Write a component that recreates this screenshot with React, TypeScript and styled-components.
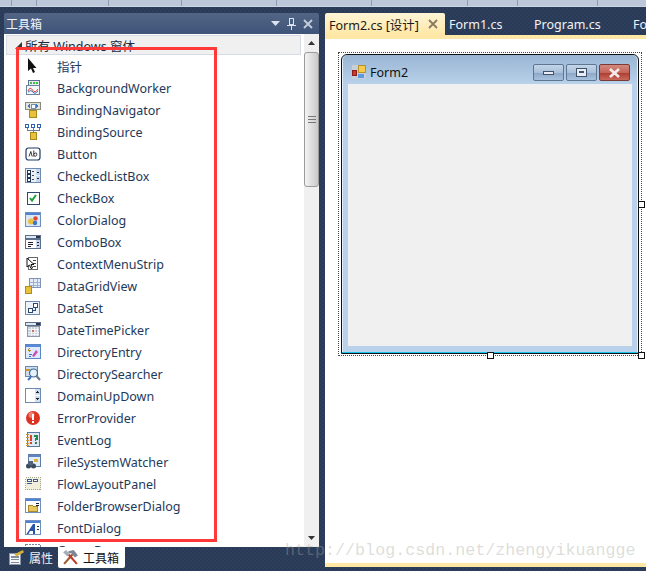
import React from 'react';
import styled, { createGlobalStyle } from 'styled-components';

const GlobalStyle = createGlobalStyle`
  html, body {
    margin: 0;
    padding: 0;
    background: #2b3c59;
  }
`;

const UI_FONT = `"Noto Sans", "Noto Sans CJK SC", sans-serif`;

const Page = styled.div`
  position: relative;
  display: flex;
  flex-direction: column;
  width: 646px;
  height: 571px;
  overflow: hidden;
  font-family: ${UI_FONT};
  background: repeating-conic-gradient(#2e3f5d 0 25%, #293a56 0 50%) 0 0 / 4px 4px;
`;

const TopBar = styled.div`
  display: flex;
  flex: none;
  height: 6px;
  background: #bcc7d9;
  border-bottom: 1px solid #cdd5e3;
`;

const TopSegment = styled.div<{ $w: number }>`
  flex: none;
  width: ${p => p.$w}px;
  border-right: 1px solid #8f9cb3;
  box-sizing: border-box;
`;

const Workspace = styled.div`
  display: flex;
  flex: 1;
  min-height: 0;
  padding: 6px 0 0 4px;
  gap: 6px;
`;

const ToolColumn = styled.div`
  display: flex;
  flex-direction: column;
  flex: none;
  width: 315px;
`;

const ToolWindow = styled.div`
  display: flex;
  flex-direction: column;
  height: 534px;
`;

const TitleBar = styled.div`
  display: flex;
  align-items: center;
  flex: none;
  height: 21px;
  padding: 0 6px 0 2px;
  border-radius: 2px 2px 0 0;
  background: linear-gradient(#526585, #3f5479);
  color: #f2f4f8;
  font-size: 12px;
`;

const TitleText = styled.span`
  flex: 1;
`;

const TitleIcons = styled.div`
  display: flex;
  align-items: center;
  gap: 7px;
`;

const ToolBody = styled.div`
  display: flex;
  flex: 1;
  min-height: 0;
  background: #fff;
`;

const ListArea = styled.div`
  flex: 1;
  min-width: 0;
  overflow: hidden;
  padding: 1px 3px 0 2px;
`;

const GroupHeader = styled.div`
  display: flex;
  align-items: center;
  gap: 3px;
  box-sizing: border-box;
  height: 20px;
  padding-left: 8px;
  background: #f0f0f0;
  border: 1px solid #d5dce6;
  color: #1c2a40;
  font-size: 12.5px;
  white-space: nowrap;
`;

const ToolRow = styled.div`
  display: flex;
  align-items: center;
  height: 22px;
  padding-left: 17px;
  color: #1e395b;
  font-size: 12.5px;
`;

const IconSlot = styled.span`
  display: flex;
  justify-content: center;
  width: 20px;
  margin-right: 14px;
  flex: none;
`;

const ScrollBar = styled.div`
  display: flex;
  flex-direction: column;
  align-items: center;
  flex: none;
  width: 15px;
  background: #f0f0f0;
`;

const ScrollArrow = styled.div`
  display: flex;
  align-items: center;
  justify-content: center;
  flex: none;
  height: 18px;
`;

const ScrollThumb = styled.div`
  display: flex;
  align-items: center;
  justify-content: center;
  box-sizing: border-box;
  flex: none;
  width: 15px;
  height: 135px;
  border: 1px solid #9a9a9a;
  border-radius: 3px;
  background: linear-gradient(90deg, #f4f4f4, #dcdcdc 55%, #c9c9c9);
`;

const ScrollTrack = styled.div`
  flex: 1;
`;

const BottomTabs = styled.div`
  display: flex;
  align-items: flex-start;
  flex: none;
  height: 24px;
  padding-left: 4px;
  gap: 3px;
`;

const BottomTab = styled.div<{ $active?: boolean }>`
  display: flex;
  align-items: center;
  gap: 4px;
  height: 21px;
  padding: ${p => (p.$active ? '0 6px 0 4px' : '0 2px 0 0')};
  font-size: 12px;
  border-radius: 0 0 2px 2px;
  background: ${p => (p.$active ? '#fff' : 'transparent')};
  color: ${p => (p.$active ? '#111' : '#eef1f6')};
`;

const DocColumn = styled.div`
  display: flex;
  flex-direction: column;
  flex: 1;
  min-width: 0;
  height: 554px;
`;

const DocTabs = styled.div`
  display: flex;
  flex: none;
  height: 22px;
  overflow: hidden;
  white-space: nowrap;
`;

const DocTab = styled.div<{ $active?: boolean; $w: number }>`
  display: flex;
  align-items: center;
  justify-content: space-between;
  box-sizing: border-box;
  flex: none;
  width: ${p => p.$w}px;
  padding: 0 7px 0 4px;
  font-size: 12.5px;
  border-radius: 2px 2px 0 0;
  background: ${p => (p.$active ? 'linear-gradient(#fff4d6, #ffe8a6)' : 'transparent')};
  color: ${p => (p.$active ? '#1a1a1a' : '#f1f3f7')};
`;

const YellowStrip = styled.div`
  flex: none;
  height: 4px;
  background: #ffe8a6;
`;

const DesignSurface = styled.div`
  flex: 1;
  min-height: 0;
  padding: 13px 0 0 13px;
  background: #fff;
`;

const Selection = styled.div`
  position: relative;
  box-sizing: border-box;
  width: 304px;
  height: 304px;
  padding: 1px 2px 1px;
  border: 1px dotted #444;
`;

const Handle = styled.span<{ $x: number; $y: number }>`
  position: absolute;
  left: ${p => p.$x}px;
  top: ${p => p.$y}px;
  box-sizing: border-box;
  width: 7px;
  height: 7px;
  background: #fff;
  border: 1px solid #111;
`;

const FormWindow = styled.div`
  display: flex;
  flex-direction: column;
  box-sizing: border-box;
  height: 100%;
  border: 1px solid #111;
  border-radius: 6px 6px 0 0;
  box-shadow: inset 0 -1px 0 #18c5ee, inset 1px 0 0 #e6f0fa, inset -1px 0 0 #e6f0fa;
  background: #b9d1ea;
  padding: 0 6px 7px;
`;

const FormCaption = styled.div`
  display: flex;
  align-items: center;
  box-sizing: border-box;
  flex: none;
  height: 29px;
  margin: 0 -5px;
  padding: 5px 7px 0 9px;
  border-radius: 5px 5px 0 0;
  background: linear-gradient(#99b5d3, #b9d1ea);
  color: #111;
  font-size: 12.5px;
`;

const FormTitle = styled.span`
  flex: 1;
  margin-left: 4px;
`;

const CaptionButtons = styled.div`
  display: flex;
  gap: 2px;
  margin-top: 1px;
`;

const CaptionButton = styled.div<{ $close?: boolean }>`
  display: flex;
  align-items: center;
  justify-content: center;
  box-sizing: border-box;
  width: 31px;
  height: 17px;
  border: 1px solid ${p => (p.$close ? '#7a3a36' : '#5f7690')};
  border-radius: 2px;
  background: ${p =>
    p.$close
      ? 'linear-gradient(#d3897f 0, #c4655a 50%, #ae3f33 55%, #c9695c 100%)'
      : 'linear-gradient(#c4d5e8 0, #a9c0da 50%, #8ea9c8 55%, #a8c1dd 100%)'};
`;

const ClientArea = styled.div`
  flex: 1;
  background: #f0f0f0;
`;

const RedFrame = styled.div`
  position: absolute;
  left: 16px;
  top: 47px;
  width: 201px;
  height: 495px;
  box-sizing: border-box;
  border: 3px solid #ff3838;
  pointer-events: none;
`;

const Watermark = styled.div`
  position: absolute;
  left: 285px;
  top: 540px;
  font-family: "Liberation Mono", monospace;
  font-size: 16.7px;
  line-height: 22px;
  color: rgba(165, 165, 155, 0.38);
  white-space: nowrap;
`;

const Svg: React.FC<{ size?: number; children: React.ReactNode }> = ({ size = 16, children }) => (
  <svg width={size} height={size} viewBox="0 0 16 16" shapeRendering="crispEdges">
    {children}
  </svg>
);

const Pointer = () => (
  <Svg>
    <path d="M3 0 L3 13 L6 10.5 L8 15 L10 14 L8 10 L11.5 10 Z" fill="#111" shapeRendering="auto" />
  </Svg>
);

const Worker = () => (
  <Svg>
    <rect x="3" y="0.5" width="11" height="5" fill="#e8eef5" stroke="#5a6f8c" />
    <rect x="5" y="2" width="2" height="2" fill="#3cc03c" />
    <rect x="8" y="2" width="2" height="2" fill="#3cc03c" />
    <rect x="11" y="2" width="2" height="2" fill="#3cc03c" />
    <rect x="1.5" y="5.5" width="13" height="9" fill="#f4f7fb" stroke="#6b84a6" />
    <path d="M3 11 Q5 6 7.5 10 T13 9" fill="none" stroke="#d8402f" shapeRendering="auto" />
    <path d="M3 12 Q6 9 8 12 T13 11" fill="none" stroke="#3c6fb8" shapeRendering="auto" />
  </Svg>
);

const Navigator = () => (
  <Svg>
    <rect x="0.5" y="0.5" width="15" height="7" fill="#e4e2d8" stroke="#8a8a78" />
    <path d="M2 4 L5 2 V6 Z M14 4 L11 2 V6 Z" fill="#3b78c4" />
    <rect x="6" y="2" width="4" height="4" fill="#fff" stroke="#7090b8" />
    <rect x="4" y="8" width="7" height="7" fill="#e8c23c" stroke="#a88a1c" />
  </Svg>
);

const Source = () => (
  <Svg>
    <path d="M2 4 V6 H14 V4 M8 4 V9" fill="none" stroke="#6b7f98" />
    <rect x="0.5" y="0.5" width="3" height="3" fill="#fff" stroke="#2f63b0" />
    <rect x="6.5" y="0.5" width="3" height="3" fill="#fff" stroke="#2f63b0" />
    <rect x="12" y="0.5" width="3" height="3" fill="#fff" stroke="#2f63b0" />
    <rect x="5" y="8" width="6" height="7" fill="#e8c23c" stroke="#a88a1c" />
  </Svg>
);

const ButtonIcon = () => (
  <Svg>
    <rect x="1" y="2" width="14" height="12" rx="2.5" fill="#fff" stroke="#1d3c66" strokeWidth="1.2" shapeRendering="auto" />
    <path d="M4 10.5 L5.8 5.5 L7.2 10.5 M8.8 4.5 V10.5 M8.8 8 Q11.8 5.6 11.8 8.4 Q11.8 11.2 8.8 9.6" fill="none" stroke="#222" strokeWidth="0.9" shapeRendering="auto" />
  </Svg>
);

const CheckedList = () => (
  <Svg>
    <rect x="0.5" y="0.5" width="15" height="14" fill="#e9f0f8" stroke="#6d8bb5" />
    <rect x="2" y="2" width="3" height="3" fill="#fff" stroke="#22344f" />
    <rect x="2" y="6" width="3" height="3" fill="#fff" stroke="#22344f" />
    <rect x="2" y="10" width="3" height="3" fill="#fff" stroke="#22344f" />
    <path d="M7 3.5 H9 M7 7.5 H9 M7 11.5 H9" stroke="#445" />
    <rect x="11" y="1" width="4" height="6" fill="#c8d8ea" />
    <rect x="11" y="8" width="4" height="6" fill="#c8d8ea" />
    <path d="M12 5 L13 3 L14 5 Z M12 10 L13 12 L14 10 Z" fill="#223" />
  </Svg>
);

const CheckBoxIcon = () => (
  <Svg>
    <rect x="2" y="2" width="12" height="12" fill="#fff" stroke="#2c4a70" />
    <path d="M5 8 L7 10.5 L11 5" fill="none" stroke="#1f9e3a" strokeWidth="2" shapeRendering="auto" />
  </Svg>
);

const ColorDialogIcon = () => (
  <Svg>
    <rect x="0.5" y="0.5" width="15" height="14" fill="#dbe6f6" stroke="#6f8fc0" />
    <rect x="1" y="1" width="14" height="2" fill="#4f82d0" />
    <circle cx="10.5" cy="6.5" r="2.2" fill="#d84a3c" shapeRendering="auto" />
    <circle cx="6" cy="9.5" r="3" fill="#e8c23c" shapeRendering="auto" />
    <circle cx="10" cy="11" r="2.2" fill="#3b78c4" shapeRendering="auto" />
  </Svg>
);

const Combo = () => (
  <Svg>
    <rect x="0.5" y="1.5" width="15" height="3" fill="#dfe7f1" stroke="#5a6f8c" />
    <rect x="11" y="2" width="4" height="2" fill="#334" />
    <rect x="0.5" y="5.5" width="15" height="9" fill="#fff" stroke="#5a6f8c" />
    <path d="M3 8 H8 M3 10 H8 M3 12 H6" stroke="#223" />
    <rect x="11" y="6" width="4" height="8" fill="#c8d8ea" />
    <path d="M12 9 L13 7 L14 9 Z M12 11 L13 13 L14 11 Z" fill="#223" />
  </Svg>
);

const ContextMenu = () => (
  <Svg>
    <rect x="3.5" y="1.5" width="9" height="12" fill="#fff" stroke="#666" />
    <path d="M8 4 H11 M8 7 H11 M8 10 H11" stroke="#445" />
    <path d="M2 2 V11 L4.5 9 L6 12.5 L7.5 12 L6 8.5 H9 Z" fill="#fff" stroke="#111" shapeRendering="auto" />
  </Svg>
);

const GridIcon = () => (
  <Svg>
    <rect x="4.5" y="0.5" width="11" height="9" fill="#e6ecf6" stroke="#7f93b8" />
    <path d="M8 1 V9 M12 1 V9 M5 4 H15 M5 7 H15" stroke="#9fb0cc" />
    <rect x="0.5" y="8" width="6" height="7" fill="#e8c23c" stroke="#b08c1c" />
  </Svg>
);

const DataSetIcon = () => (
  <Svg>
    <rect x="0.5" y="1.5" width="14" height="13" fill="#eef3fa" stroke="#6d8bb5" />
    <rect x="8" y="3" width="4" height="4" fill="#fff" stroke="#2c4a70" />
    <rect x="3" y="8" width="4" height="4" fill="#fff" stroke="#2c4a70" />
    <path d="M7 10 H10 V7" fill="none" stroke="#2c4a70" />
  </Svg>
);

const DatePicker = () => (
  <Svg>
    <rect x="0.5" y="0.5" width="15" height="3" fill="#dfe7f1" stroke="#5a6f8c" />
    <rect x="11" y="1" width="4" height="2" fill="#334" />
    <rect x="2.5" y="4.5" width="12" height="10" fill="#c9cfdb" stroke="#8d97a9" />
    <path d="M3 7 H14 M3 10 H14 M3 12.5 H14 M6 5 V14 M9 5 V14 M12 5 V14" stroke="#f0f2f6" />
    <rect x="7" y="8" width="2" height="2" fill="#c9705c" />
  </Svg>
);

const DirEntry = () => (
  <Svg>
    <rect x="0.5" y="0.5" width="15" height="14" fill="#dfeafa" stroke="#5a86c8" />
    <rect x="1" y="1" width="14" height="2" fill="#5a8ad6" />
    <path d="M3 6 H6 M5 4.5 L3 6 L5 8" fill="none" stroke="#b88a1c" />
    <path d="M7 12 L11 6 L13 8 L9 13 Z" fill="#c94fb8" shapeRendering="auto" />
    <path d="M4 10 H7 M4 12 H6" stroke="#3b6fb8" />
  </Svg>
);

const DirSearch = () => (
  <Svg>
    <rect x="0.5" y="0.5" width="12" height="10" fill="#cfdcf0" stroke="#6a88b5" />
    <circle cx="8.5" cy="7" r="4" fill="#e6f2fa" stroke="#3c6a98" strokeWidth="1.2" shapeRendering="auto" />
    <path d="M11.5 10 L15 14" stroke="#6a7a8c" strokeWidth="2" shapeRendering="auto" />
    <path d="M1 4 H5" stroke="#c49a28" strokeWidth="2" />
    <path d="M3 14 L6 11" stroke="#3b6fb8" strokeWidth="2" shapeRendering="auto" />
  </Svg>
);

const UpDown = () => (
  <Svg>
    <rect x="0.5" y="0.5" width="15" height="14" fill="#fff" stroke="#6d8bb5" />
    <rect x="10" y="1" width="5" height="6" fill="#d2deec" />
    <rect x="10" y="8" width="5" height="6" fill="#d2deec" />
    <path d="M11 5 L12.5 3 L14 5 Z M11 10 L12.5 12 L14 10 Z" fill="#223" />
  </Svg>
);

const ErrorIcon = () => (
  <Svg>
    <circle cx="8" cy="8" r="7" fill="#dd3322" shapeRendering="auto" />
    <circle cx="6.5" cy="5" r="3" fill="#f08070" shapeRendering="auto" />
    <rect x="7" y="3.5" width="2.2" height="6" fill="#fff" />
    <rect x="7" y="10.5" width="2.2" height="2.2" fill="#fff" />
  </Svg>
);

const EventLogIcon = () => (
  <Svg>
    <rect x="2.5" y="0.5" width="12" height="14" fill="#dfe8f4" stroke="#5a7aa5" />
    <path d="M1 2 H4 M1 5 H4 M1 8 H4 M1 11 H4 M1 13 H4" stroke="#c49a28" />
    <rect x="5" y="3" width="2" height="6" fill="#d8402f" />
    <rect x="5" y="10" width="2" height="2" fill="#d8402f" />
    <path d="M9 4 H12 V7 H10.5 V9" fill="none" stroke="#1f8a4a" strokeWidth="1.5" />
    <rect x="10" y="10" width="2" height="2" fill="#1f8a4a" />
  </Svg>
);

const Watcher = () => (
  <Svg>
    <rect x="3.5" y="0.5" width="12" height="12" fill="#e3ebf6" stroke="#5f7da8" />
    <rect x="4" y="1" width="11" height="2" fill="#5f86c0" />
    <rect x="9" y="5" width="4" height="3" fill="#d8b53c" />
    <circle cx="3.5" cy="12" r="2.5" fill="#3a4a5c" shapeRendering="auto" />
    <circle cx="8.5" cy="12" r="2.5" fill="#3a4a5c" shapeRendering="auto" />
    <rect x="3" y="7" width="5" height="4" fill="#51647c" />
  </Svg>
);

const FlowIcon = () => (
  <Svg>
    <rect x="0.5" y="1.5" width="15" height="12" fill="#f1eedc" stroke="#a8a890" strokeDasharray="1 1" />
    <rect x="2.5" y="3.5" width="4" height="2" fill="#fff" stroke="#3d5f90" />
    <rect x="8.5" y="3.5" width="4" height="2" fill="#fff" stroke="#3d5f90" />
    <path d="M2 7.5 H7" stroke="#3d5f90" />
  </Svg>
);

const FolderIcon = () => (
  <Svg>
    <rect x="0.5" y="0.5" width="15" height="14" fill="#fff" stroke="#6f8fc0" />
    <rect x="1" y="1" width="14" height="2" fill="#4f82d0" />
    <path d="M3 7 H7 L8 8 H12 V13 H3 Z" fill="#e8c85c" stroke="#a88a2c" />
    <path d="M11 5 H14 M11 7 H14" stroke="#223" />
  </Svg>
);

const FontIcon = () => (
  <Svg>
    <rect x="0.5" y="0.5" width="15" height="14" fill="#fff" stroke="#6f8fc0" />
    <rect x="1" y="1" width="14" height="2" fill="#4f82d0" />
    <path d="M1.5 14 L8 4 H10 V14 H8 V11 H5 L3.5 14 Z" fill="#2a54a8" shapeRendering="auto" />
    <path d="M12 6 H14 M12 9 H14" stroke="#223" />
  </Svg>
);

const GroupIcon = () => (
  <Svg>
    <rect x="0.5" y="2.5" width="15" height="11" fill="#fff" stroke="#789" strokeDasharray="2 1" />
  </Svg>
);

const PanelDrop = () => (
  <svg width="9" height="5" viewBox="0 0 9 5"><path d="M0 0 H9 L4.5 5 Z" fill="#dbe2ee" /></svg>
);

const PanelPin = () => (
  <svg width="9" height="12" viewBox="0 0 9 12" shapeRendering="crispEdges">
    <path d="M2.5 0.5 H6.5 V6.5 H2.5 Z M0 7.5 H9 M4.5 8 V12" fill="none" stroke="#dbe2ee" />
  </svg>
);

const PanelClose = ({ color = '#c4cddc' }: { color?: string }) => (
  <svg width="10" height="10" viewBox="0 0 10 10">
    <path d="M1 1 L9 9 M9 1 L1 9" stroke={color} strokeWidth="1.8" />
  </svg>
);

const TriUp = () => (
  <svg width="7" height="4" viewBox="0 0 7 4"><path d="M0 4 H7 L3.5 0 Z" fill="#333" /></svg>
);

const TriDown = () => (
  <svg width="7" height="4" viewBox="0 0 7 4"><path d="M0 0 H7 L3.5 4 Z" fill="#333" /></svg>
);

const Grip = () => (
  <svg width="8" height="8" viewBox="0 0 8 8" shapeRendering="crispEdges">
    <path d="M0 0.5 H8 M0 3.5 H8 M0 6.5 H8" stroke="#777" />
  </svg>
);

const Expander = () => (
  <svg width="7" height="7" viewBox="0 0 7 7"><path d="M7 0 V7 H0 Z" fill="#333" /></svg>
);

const PropertiesIcon = () => (
  <Svg size={17}>
    <rect x="1.5" y="4.5" width="10" height="10" fill="#f3f5f8" stroke="#8896a8" />
    <path d="M3 7.5 H10 M3 10 H10 M3 12.5 H10" stroke="#7f8c9e" />
    <path d="M6 5 L14 1 L15 3 L8 7 Z" fill="#d4b13c" shapeRendering="auto" />
  </Svg>
);

const ToolboxIcon = () => (
  <svg width="17" height="17" viewBox="0 0 16 16">
    <path d="M2 14 L10 5" stroke="#9a5a2c" strokeWidth="2" />
    <path d="M6 2 L11 1 L15 6 L12 8 L9 4 L6 4 Z" fill="#7c8694" />
    <path d="M14 14 L6 5" stroke="#c0392b" strokeWidth="2" />
    <path d="M1 3 L4 1 L7 5 L5 7 Z" fill="#a5adb8" />
  </svg>
);

const FormIcon = () => (
  <svg width="14" height="14" viewBox="0 0 14 14" shapeRendering="crispEdges">
    <rect x="0" y="0" width="14" height="14" fill="#c7cfd8" />
    <rect x="6" y="0.5" width="7" height="7" fill="#f4cb4c" stroke="#b8902c" />
    <rect x="0.5" y="5.5" width="4" height="5" fill="#d0352c" stroke="#8a1f1a" />
    <rect x="6" y="9" width="6" height="4" fill="#5d9ae0" />
  </svg>
);

const MinGlyph = () => (
  <svg width="11" height="4" viewBox="0 0 11 4" shapeRendering="crispEdges">
    <rect x="0.5" y="0.5" width="10" height="3" fill="#e9eef4" stroke="#40526a" />
  </svg>
);

const MaxGlyph = () => (
  <svg width="11" height="9" viewBox="0 0 11 9" shapeRendering="crispEdges">
    <rect x="0.5" y="0.5" width="10" height="8" fill="#e9eef4" stroke="#40526a" />
    <rect x="3" y="3" width="5" height="2" fill="#40526a" />
  </svg>
);

const CloseGlyph = () => (
  <svg width="13" height="10" viewBox="0 0 13 10">
    <path d="M2 1 L11 9 M11 1 L2 9" stroke="#f4ecea" strokeWidth="2.6" />
  </svg>
);

const TOOLS: [React.FC, string][] = [
  [Pointer, '指针'],
  [Worker, 'BackgroundWorker'],
  [Navigator, 'BindingNavigator'],
  [Source, 'BindingSource'],
  [ButtonIcon, 'Button'],
  [CheckedList, 'CheckedListBox'],
  [CheckBoxIcon, 'CheckBox'],
  [ColorDialogIcon, 'ColorDialog'],
  [Combo, 'ComboBox'],
  [ContextMenu, 'ContextMenuStrip'],
  [GridIcon, 'DataGridView'],
  [DataSetIcon, 'DataSet'],
  [DatePicker, 'DateTimePicker'],
  [DirEntry, 'DirectoryEntry'],
  [DirSearch, 'DirectorySearcher'],
  [UpDown, 'DomainUpDown'],
  [ErrorIcon, 'ErrorProvider'],
  [EventLogIcon, 'EventLog'],
  [Watcher, 'FileSystemWatcher'],
  [FlowIcon, 'FlowLayoutPanel'],
  [FolderIcon, 'FolderBrowserDialog'],
  [FontIcon, 'FontDialog'],
  [GroupIcon, 'GroupBox'],
];

const TOP_SEGMENTS = [12, 25, 72, 73, 95, 95, 96, 50, 80];

const App = () => {
  return (
    <Page>
      <GlobalStyle />
      <TopBar>
        {TOP_SEGMENTS.map((w, i) => (
          <TopSegment key={i} $w={w} />
        ))}
      </TopBar>
      <Workspace>
        <ToolColumn>
          <ToolWindow>
            <TitleBar>
              <TitleText>工具箱</TitleText>
              <TitleIcons>
                <PanelDrop />
                <PanelPin />
                <PanelClose />
              </TitleIcons>
            </TitleBar>
            <ToolBody>
              <ListArea>
                <GroupHeader>
                  <Expander />
                  所有 Windows 窗体
                </GroupHeader>
                {TOOLS.map(([Icon, label]) => (
                  <ToolRow key={label}>
                    <IconSlot>
                      <Icon />
                    </IconSlot>
                    {label}
                  </ToolRow>
                ))}
              </ListArea>
              <ScrollBar>
                <ScrollArrow>
                  <TriUp />
                </ScrollArrow>
                <ScrollThumb>
                  <Grip />
                </ScrollThumb>
                <ScrollTrack />
                <ScrollArrow>
                  <TriDown />
                </ScrollArrow>
              </ScrollBar>
            </ToolBody>
          </ToolWindow>
          <BottomTabs>
            <BottomTab>
              <PropertiesIcon />
              属性
            </BottomTab>
            <BottomTab $active>
              <ToolboxIcon />
              工具箱
            </BottomTab>
          </BottomTabs>
        </ToolColumn>
        <DocColumn>
          <DocTabs>
            <DocTab $active $w={120}>
              Form2.cs [设计]
              <PanelClose color="#8a7a5c" />
            </DocTab>
            <DocTab $w={85}>Form1.cs</DocTab>
            <DocTab $w={99}>Program.cs</DocTab>
            <DocTab $w={60}>Form1.Designer.cs</DocTab>
          </DocTabs>
          <YellowStrip />
          <DesignSurface>
            <Selection>
              <FormWindow>
                <FormCaption>
                  <FormIcon />
                  <FormTitle>Form2</FormTitle>
                  <CaptionButtons>
                    <CaptionButton>
                      <MinGlyph />
                    </CaptionButton>
                    <CaptionButton>
                      <MaxGlyph />
                    </CaptionButton>
                    <CaptionButton $close>
                      <CloseGlyph />
                    </CaptionButton>
                  </CaptionButtons>
                </FormCaption>
                <ClientArea />
              </FormWindow>
              <Handle $x={148} $y={299} />
              <Handle $x={299} $y={299} />
              <Handle $x={299} $y={148} />
            </Selection>
          </DesignSurface>
          <YellowStrip />
        </DocColumn>
      </Workspace>
      <RedFrame />
      <Watermark>http://blog.csdn.net/zhengyikuangge</Watermark>
    </Page>
  );
};

export default App;
